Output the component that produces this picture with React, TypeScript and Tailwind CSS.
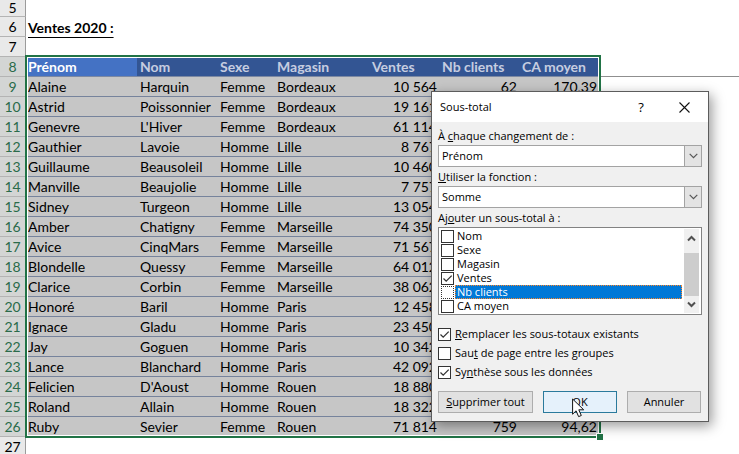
import { useState } from "react";

const headers = ["Prénom", "Nom", "Sexe", "Magasin", "Ventes", "Nb clients", "CA moyen"];

const rows = [
  ["Alaine", "Harquin", "Femme", "Bordeaux", "10\u202f564", "62", "170,39"],
  ["Astrid", "Poissonnier", "Femme", "Bordeaux", "19\u202f161", "184", "104,14"],
  ["Genevre", "L'Hiver", "Femme", "Bordeaux", "61\u202f114", "620", "98,57"],
  ["Gauthier", "Lavoie", "Homme", "Lille", "8\u202f767", "95", "92,28"],
  ["Guillaume", "Beausoleil", "Homme", "Lille", "10\u202f460", "110", "95,09"],
  ["Manville", "Beaujolie", "Homme", "Lille", "7\u202f757", "76", "102,07"],
  ["Sidney", "Turgeon", "Homme", "Lille", "13\u202f054", "130", "100,42"],
  ["Amber", "Chatigny", "Femme", "Marseille", "74\u202f350", "780", "95,32"],
  ["Avice", "CinqMars", "Femme", "Marseille", "71\u202f567", "750", "95,42"],
  ["Blondelle", "Quessy", "Femme", "Marseille", "64\u202f012", "640", "100,02"],
  ["Clarice", "Corbin", "Femme", "Marseille", "38\u202f062", "400", "95,16"],
  ["Honoré", "Baril", "Homme", "Paris", "12\u202f458", "120", "103,82"],
  ["Ignace", "Gladu", "Homme", "Paris", "23\u202f450", "250", "93,80"],
  ["Jay", "Goguen", "Homme", "Paris", "10\u202f342", "100", "103,42"],
  ["Lance", "Blanchard", "Homme", "Paris", "42\u202f092", "430", "97,89"],
  ["Felicien", "D'Aoust", "Homme", "Rouen", "18\u202f880", "190", "99,37"],
  ["Roland", "Allain", "Homme", "Rouen", "18\u202f322", "180", "101,79"],
  ["Ruby", "Sevier", "Femme", "Rouen", "71\u202f814", "759", "94,62"],
];

const fields = ["Nom", "Sexe", "Magasin", "Ventes", "Nb clients", "CA moyen"];

function RowNumber({ n, selected = false, short = false }: { n: number; selected?: boolean; short?: boolean }) {
  return (
    <th
      scope="row"
      className={`border-r border-b border-r-[#9b9b9b] border-b-[#b4b4b4] p-0 text-center font-normal ${
        short ? "h-[17px] leading-4" : "h-5"
      } ${selected ? "bg-[#d3d5d4] text-[#2a6b4a]" : "bg-[#e9e9e9] text-black"}`}
    >
      {n}
    </th>
  );
}

function Sheet() {
  return (
    <div className="relative">
      <table className="w-full table-fixed border-separate border-spacing-0 font-['Lato',sans-serif] text-sm/[19px] whitespace-nowrap text-black">
        <colgroup>
          <col className="w-[26px]" />
          <col className="w-[111px]" />
          <col className="w-20" />
          <col className="w-[57px]" />
          <col className="w-[95px]" />
          <col className="w-[70px]" />
          <col className="w-20" />
          <col className="w-20" />
          <col />
        </colgroup>
        <tbody>
          <tr>
            <RowNumber n={5} short />
            <td colSpan={8} className="p-0" />
          </tr>
          <tr>
            <RowNumber n={6} />
            <td colSpan={8} className="p-0 pl-0.5 font-bold">
              <span className="underline decoration-1 underline-offset-4">Ventes 2020 :</span>
            </td>
          </tr>
          <tr>
            <RowNumber n={7} />
            <td colSpan={8} className="p-0" />
          </tr>
          <tr>
            <RowNumber n={8} selected />
            {headers.map((h, i) => (
              <th
                key={h}
                scope="col"
                className={`border-b border-[#7c89a3] p-0 text-left font-bold ${
                  i === 0 ? "bg-[#4472c4] pl-0.5 text-white" : "bg-[#335593] pl-[3px] text-[#c6cde0]"
                }`}
              >
                {h}
              </th>
            ))}
            <td className="border-b border-[#8f8f8f] p-0" />
          </tr>
          {rows.map((r, i) => (
            <tr key={r[0]}>
              <RowNumber n={i + 9} selected />
              {r.map((v, c) => (
                <td
                  key={c}
                  className={`border-b border-[#76839c] bg-[#c6c6c6] p-0 ${
                    c > 3 ? "pr-0.5 text-right" : c === 0 ? "pl-0.5" : "pl-[3px]"
                  }`}
                >
                  {v}
                </td>
              ))}
              <td className="p-0" />
            </tr>
          ))}
          <tr>
            <RowNumber n={27} />
            <td colSpan={8} className="p-0" />
          </tr>
        </tbody>
      </table>

      {/* Selection outline and fill handle */}
      <div className="pointer-events-none absolute top-[55px] left-[25px] h-[383px] w-[576px] border-2 border-[#217346] inset-ring inset-ring-white">
        <span className="absolute -right-1 -bottom-1 size-[7px] border-t border-l border-white bg-[#217346]" />
      </div>
    </div>
  );
}

function Check({ checked, onChange, id, dotted = false }: { checked: boolean; onChange: () => void; id: string; dotted?: boolean }) {
  return (
    <span className="relative block size-[13px] shrink-0">
      <input
        id={id}
        type="checkbox"
        checked={checked}
        onChange={onChange}
        className={`peer block size-[13px] appearance-none border border-[#333] bg-white ${dotted ? "border-dotted" : ""}`}
      />
      <svg viewBox="0 0 13 13" className="pointer-events-none invisible absolute inset-0 size-[13px] peer-checked:visible" fill="none" stroke="#333" strokeWidth="1.3">
        <path d="M2.5 6.5 5.2 9.2 10.7 3.6" />
      </svg>
    </span>
  );
}

function Combo({ id, options }: { id: string; options: string[] }) {
  return (
    <div className="relative">
      <select id={id} className="block h-[22px] w-full appearance-none border border-[#a3a3a3] bg-white pl-[3px]">
        {options.map((o) => (
          <option key={o}>{o}</option>
        ))}
      </select>
      <span className="pointer-events-none absolute inset-y-0 right-0 flex w-[18px] items-center justify-center border border-[#a3a3a3] bg-[#e3e3e3]">
        <svg viewBox="0 0 9 6" className="h-1.5 w-[9px]" fill="none" stroke="#555" strokeWidth="1.2">
          <path d="M.7.8 4.5 4.6 8.3.8" />
        </svg>
      </span>
    </div>
  );
}

function SubtotalDialog() {
  const [checked, setChecked] = useState<string[]>(["Ventes", "replace", "summary"]);
  const toggle = (k: string) => setChecked((c) => (c.includes(k) ? c.filter((x) => x !== k) : [...c, k]));

  return (
    <div
      role="dialog"
      aria-labelledby="dlg-title"
      className="absolute top-[91px] left-[431px] w-[278px] border border-[#5c5c5c] bg-[#f0f0f0] font-['Open_Sans',sans-serif] text-[11px]/[14px] text-black shadow-[3px_4px_12px_rgba(0,0,0,0.4)]"
    >
      <div className="flex h-[30px] items-center bg-white pr-4 pl-2">
        <h2 id="dlg-title" className="flex-1">Sous-total</h2>
        <button aria-label="Aide" className="mr-7 w-4 text-[13px]">?</button>
        <button aria-label="Fermer" className="p-0.5">
          <svg viewBox="0 0 11 11" className="size-[11px]" fill="none" stroke="#111" strokeWidth="1.1">
            <path d="M.5.5l10 10M10.5.5l-10 10" />
          </svg>
        </button>
      </div>

      <div className="px-1.5 pt-[7px] pb-2">
        <label htmlFor="group" className="mb-0.5 block">
          À <u>c</u>haque changement de :
        </label>
        <Combo id="group" options={["Prénom", "Nom", "Sexe", "Magasin"]} />
        <label htmlFor="fn" className="mt-[3px] mb-0.5 block">
          <u>U</u>tiliser la fonction :
        </label>
        <Combo id="fn" options={["Somme", "Nombre", "Moyenne"]} />
        <p id="fields-label" className="mt-[3px] mb-0.5">
          Aj<u>o</u>uter un sous-total à :
        </p>

        <div role="group" aria-labelledby="fields-label" className="flex h-[88px] border border-[#828282] bg-white px-0.5 py-px">
          <ul className="flex-1">
            {fields.map((f) => {
              const active = f === "Nb clients";
              return (
                <li key={f} className="flex h-3.5 items-center">
                  <Check id={f} checked={checked.includes(f)} onChange={() => toggle(f)} dotted={active} />
                  <label
                    htmlFor={f}
                    className={`ml-px h-3.5 flex-1 pl-0.5 ${
                      active ? "bg-[#0078d7] text-white outline-1 -outline-offset-1 outline-dotted outline-[#ff8728]" : ""
                    }`}
                  >
                    {f}
                  </label>
                </li>
              );
            })}
          </ul>
          <div className="ml-0.5 flex w-[15px] flex-col items-center bg-[#f0f0f0]">
            <svg viewBox="0 0 15 24" className="h-6 w-[15px]" fill="none" stroke="#505050" strokeWidth="2">
              <path d="M4 11.5 7.5 8l3.5 3.5" />
            </svg>
            <div className="w-full flex-1 bg-[#cdcdcd]" />
            <svg viewBox="0 0 15 17" className="h-[17px] w-[15px]" fill="none" stroke="#505050" strokeWidth="2">
              <path d="M4 6.5 7.5 10 11 6.5" />
            </svg>
          </div>
        </div>

        <div className="mt-3 flex flex-col gap-[5px]">
          <div className="flex items-center gap-1">
            <Check id="replace" checked={checked.includes("replace")} onChange={() => toggle("replace")} />
            <label htmlFor="replace"><u>R</u>emplacer les sous-totaux existants</label>
          </div>
          <div className="flex items-center gap-1">
            <Check id="pages" checked={checked.includes("pages")} onChange={() => toggle("pages")} />
            <label htmlFor="pages">Sau<u>t</u> de page entre les groupes</label>
          </div>
          <div className="flex items-center gap-1">
            <Check id="summary" checked={checked.includes("summary")} onChange={() => toggle("summary")} />
            <label htmlFor="summary">Sy<u>n</u>thèse sous les données</label>
          </div>
        </div>

        <div className="mt-3 flex gap-2.5">
          <button className="h-[22px] w-[95px] border border-[#adadad] bg-[#e1e1e1]"><u>S</u>upprimer tout</button>
          <button className="relative h-[22px] w-[74px] border border-[#2a7a9c] bg-[#e5f1fb]">
            OK
            {/* Mouse pointer */}
            <svg viewBox="0 0 13 20" className="absolute top-1.5 left-7 h-5 w-[13px]" fill="#fff" stroke="#111" strokeWidth="1">
              <path d="M.6 1v15.2l3.5-3.4 2.5 5.8 2.7-1.1-2.5-5.7h4.9z" />
            </svg>
          </button>
          <button className="h-[22px] w-[74px] border border-[#adadad] bg-[#e1e1e1]">Annuler</button>
        </div>
      </div>
    </div>
  );
}

export default function App() {
  return (
    <main className="relative h-screen overflow-hidden bg-white">
      <Sheet />
      <SubtotalDialog />
    </main>
  );
}
